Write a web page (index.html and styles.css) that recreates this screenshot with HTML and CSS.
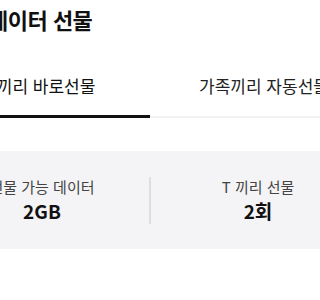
FILE: index.html
```html
<!DOCTYPE html>
<html lang="ko">
<head>
<meta charset="utf-8">
<link rel="stylesheet" href="styles.css">
</head>
<body>
<div class="page">
  <h1 class="title">데이터 선물</h1>
  <div class="tabs">
    <div class="tab active">T끼리 바로선물</div>
    <div class="tab">가족끼리 자동선물</div>
  </div>
  <div class="stats">
    <div class="stat">
      <div class="label">선물 가능 데이터</div>
      <div class="value">2GB</div>
    </div>
    <div class="stat divided">
      <div class="label">T 끼리 선물</div>
      <div class="value">2회</div>
    </div>
  </div>
</div>
</body>
</html>
```

FILE: styles.css
```css
html, body {
  margin: 0;
  padding: 0;
  background: #ffffff;
  overflow: hidden;
}
body {
  font-family: "Noto Sans CJK KR", "Noto Sans", sans-serif;
  color: #111111;
}
.page {
  width: 456px;
  margin-left: -78px;
}
.title {
  margin: 0;
  padding: 4px 0 0 66px;
  font-size: 22px;
  line-height: 30px;
  font-weight: 700;
  letter-spacing: -0.5px;
  color: #111111;
}
.tabs {
  display: flex;
  align-items: flex-end;
  margin-top: 40px;
}
.tab {
  flex: 0 0 228px;
  box-sizing: border-box;
  text-align: center;
  font-size: 17px;
  line-height: 24px;
  color: #222222;
  padding-bottom: 18px;
  border-bottom: 2px solid #f1f1f3;
}
.tab.active {
  color: #111111;
  padding: 0 0 17px 10px;
  border-bottom: 3px solid #111111;
}
.stats {
  display: flex;
  margin: 33px 13px 0;
  padding: 26px 0 25px;
  background: #f4f4f6;
}
.stat {
  flex: 1;
  display: flex;
  flex-direction: column;
  align-items: center;
}
.stat.divided {
  border-left: 2px solid #dedee2;
}
.label {
  font-size: 15px;
  line-height: 20px;
  color: #444444;
}
.value {
  font-size: 19px;
  line-height: 27px;
  font-weight: 700;
  color: #111111;
}
```
